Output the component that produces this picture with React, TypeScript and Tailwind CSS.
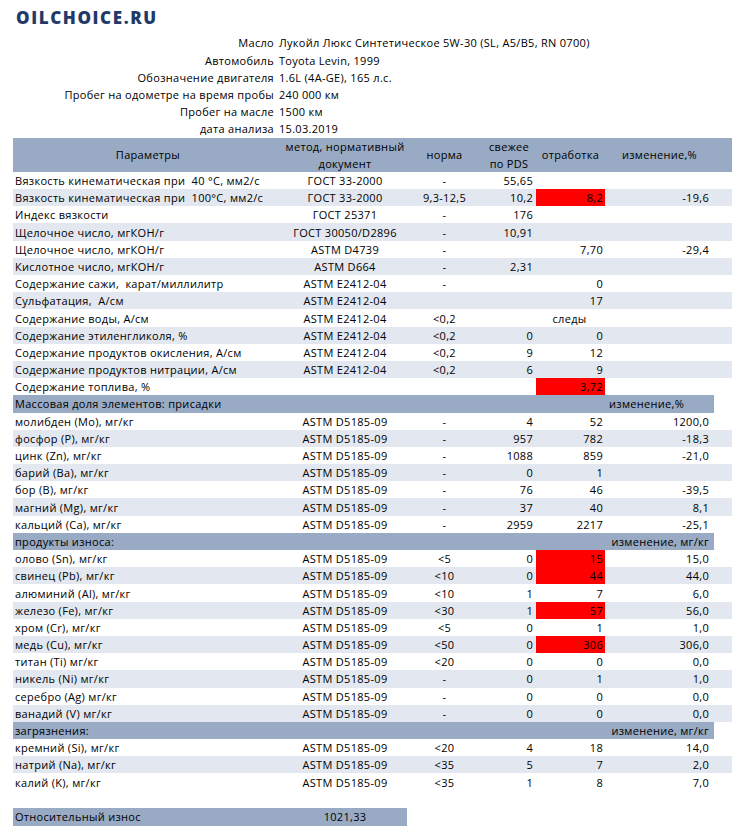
import React from "react"

type Row = {
  p: string
  m?: string
  n?: string
  f?: string
  u?: string
  c?: string
  red?: boolean
  center?: boolean
}

type Section = {
  title?: string
  change?: string
  changeRight?: boolean
  rows: Row[]
}

const info = [
  ["Масло", "Лукойл Люкс Синтетическое 5W-30 (SL, A5/B5, RN 0700)"],
  ["Автомобиль", "Toyota Levin, 1999"],
  ["Обозначение двигателя", "1.6L (4A-GE), 165 л.с."],
  ["Пробег на одометре на время пробы", "240 000 км"],
  ["Пробег на масле", "1500 км"],
  ["дата анализа", "15.03.2019"],
]

const AST = "ASTM D5185-09"
const E24 = "ASTM E2412-04"

const sections: Section[] = [
  {
    rows: [
      { p: "Вязкость кинематическая при  40 °C, мм2/с", m: "ГОСТ 33-2000", n: "-", f: "55,65" },
      { p: "Вязкость кинематическая при  100°C, мм2/с", m: "ГОСТ 33-2000", n: "9,3-12,5", f: "10,2", u: "8,2", c: "-19,6", red: true },
      { p: "Индекс вязкости", m: "ГОСТ 25371", n: "-", f: "176" },
      { p: "Щелочное число, мгКОН/г", m: "ГОСТ 30050/D2896", n: "-", f: "10,91" },
      { p: "Щелочное число, мгКОН/г", m: "ASTM D4739", n: "-", u: "7,70", c: "-29,4" },
      { p: "Кислотное число, мгКОН/г", m: "ASTM D664", n: "-", f: "2,31" },
      { p: "Содержание сажи,  карат/миллилитр", m: E24, n: "-", u: "0" },
      { p: "Сульфатация,  А/см", m: E24, u: "17" },
      { p: "Содержание воды, А/см", m: E24, n: "<0,2", u: "следы", center: true },
      { p: "Содержание этиленгликоля, %", m: E24, n: "<0,2", f: "0", u: "0" },
      { p: "Содержание продуктов окисления, А/см", m: E24, n: "<0,2", f: "9", u: "12" },
      { p: "Содержание продуктов нитрации, А/см", m: E24, n: "<0,2", f: "6", u: "9" },
      { p: "Содержание топлива, %", u: "3,72", red: true },
    ],
  },
  {
    title: "Массовая доля элементов: присадки",
    change: "изменение,%",
    rows: [
      { p: "молибден (Mo), мг/кг", m: AST, n: "-", f: "4", u: "52", c: "1200,0" },
      { p: "фосфор (P), мг/кг", m: AST, n: "-", f: "957", u: "782", c: "-18,3" },
      { p: "цинк (Zn), мг/кг", m: AST, n: "-", f: "1088", u: "859", c: "-21,0" },
      { p: "барий (Ba), мг/кг", m: AST, n: "-", f: "0", u: "1" },
      { p: "бор (B), мг/кг", m: AST, n: "-", f: "76", u: "46", c: "-39,5" },
      { p: "магний (Mg), мг/кг", m: AST, n: "-", f: "37", u: "40", c: "8,1" },
      { p: "кальций (Ca), мг/кг", m: AST, n: "-", f: "2959", u: "2217", c: "-25,1" },
    ],
  },
  {
    title: "продукты износа:",
    change: "изменение, мг/кг",
    changeRight: true,
    rows: [
      { p: "олово (Sn), мг/кг", m: AST, n: "<5", f: "0", u: "15", c: "15,0", red: true },
      { p: "свинец (Pb), мг/кг", m: AST, n: "<10", f: "0", u: "44", c: "44,0", red: true },
      { p: "алюминий (Al), мг/кг", m: AST, n: "<10", f: "1", u: "7", c: "6,0" },
      { p: "железо (Fe), мг/кг", m: AST, n: "<30", f: "1", u: "57", c: "56,0", red: true },
      { p: "хром (Cr), мг/кг", m: AST, n: "<5", f: "0", u: "1", c: "1,0" },
      { p: "медь (Cu), мг/кг", m: AST, n: "<50", f: "0", u: "306", c: "306,0", red: true },
      { p: "титан (Ti) мг/кг", m: AST, n: "<20", f: "0", u: "0", c: "0,0" },
      { p: "никель (Ni) мг/кг", m: AST, n: "-", f: "0", u: "1", c: "1,0" },
      { p: "серебро (Ag) мг/кг", m: AST, n: "-", f: "0", u: "0", c: "0,0" },
      { p: "ванадий (V) мг/кг", m: AST, n: "-", f: "0", u: "0", c: "0,0" },
    ],
  },
  {
    title: "загрязнения:",
    change: "изменение, мг/кг",
    changeRight: true,
    rows: [
      { p: "кремний (Si), мг/кг", m: AST, n: "<20", f: "4", u: "18", c: "14,0" },
      { p: "натрий (Na), мг/кг", m: AST, n: "<35", f: "5", u: "7", c: "2,0" },
      { p: "калий (K), мг/кг", m: AST, n: "<35", f: "1", u: "8", c: "7,0" },
    ],
  },
]

const cols = "grid grid-cols-[270px_124px_75px_54px_69px_109px]"

function DataRow({ r, shaded }: { r: Row; shaded: boolean }) {
  return (
    <div className={`${cols} h-[17.2px] items-stretch ${shaded ? "bg-[#e3e8f0]" : "bg-white"}`}>
      <div className="flex items-center pl-[2px] whitespace-pre">{r.p}</div>
      <div className="flex items-center justify-center">{r.m}</div>
      <div className="flex items-center justify-center">{r.n}</div>
      <div className="flex items-center justify-end pr-[3px]">{r.f}</div>
      <div
        className={`flex items-center pr-[2px] ${r.center ? "justify-center" : "justify-end"} ${
          r.red ? "bg-[#ff0000]" : ""
        }`}
      >
        {r.u}
      </div>
      <div className="flex items-center justify-end pr-[5px]">{r.c}</div>
    </div>
  )
}

export default function App() {
  return (
    <div className="w-[732px] min-h-[834px] bg-white text-black font-['Open_Sans',sans-serif] text-[11px] tracking-[0.3px] leading-none">
      <div className="h-[34.4px] pl-[16px] pt-[9px]">
        <span className="text-[17px] font-extrabold tracking-[1.6px] text-[#1f3a68] leading-none">
          OILCHOICE.RU
        </span>
      </div>

      <div className="pl-[13px]">
        {info.map(([label, value]) => (
          <div key={label} className="flex h-[17.2px] items-center">
            <div className="w-[264px] pr-[3px] text-right">{label}</div>
            <div className="pl-[2px]">{value}</div>
          </div>
        ))}
      </div>

      <div className="pl-[13px]">
        <div className={`${cols} h-[34.4px] bg-[#98aac4] items-center`}>
          <div className="text-center">Параметры</div>
          <div className="text-center leading-[17px]">
            метод, нормативный
            <br />
            документ
          </div>
          <div className="text-center">норма</div>
          <div className="text-center leading-[17px]">
            свежее
            <br />
            по PDS
          </div>
          <div className="text-center">отработка</div>
          <div className="text-center">изменение,%</div>
        </div>

        {sections.map((s, si) => (
          <div key={si}>
            {s.title && (
              <div className="flex h-[17.2px] w-[701px] items-center bg-[#98aac4]">
                <div className="w-[592px] pl-[2px]">{s.title}</div>
                <div className={`w-[109px] ${s.changeRight ? "pr-[5px] text-right" : "pl-[4px]"}`}>
                  {s.change}
                </div>
              </div>
            )}
            {s.rows.map((r, i) => (
              <DataRow key={i} r={r} shaded={i % 2 === 1} />
            ))}
          </div>
        ))}

        <div className="h-[17.2px]" />
        <div className="flex h-[18px] w-[394px] items-center bg-[#98aac4]">
          <div className="w-[270px] pl-[2px]">Относительный износ</div>
          <div className="w-[124px] text-center">1021,33</div>
        </div>
      </div>
    </div>
  )
}
